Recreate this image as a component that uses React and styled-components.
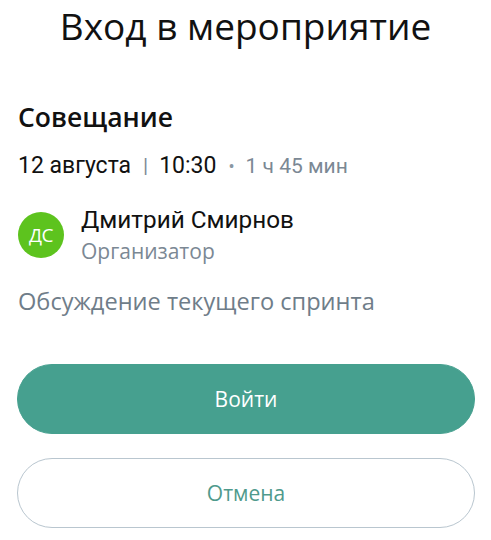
import React from "react";
import styled, { createGlobalStyle } from "styled-components";

const GlobalStyle = createGlobalStyle`
  body {
    margin: 0;
    background: #ffffff;
  }
`;

const Page = styled.div`
  width: 491px;
  height: 540px;
  box-sizing: border-box;
  padding: 0 17px;
  display: flex;
  flex-direction: column;
  background: #ffffff;
  font-family: "Open Sans", sans-serif;
`;

const Title = styled.h1`
  margin: 3px 0 0 0;
  text-align: center;
  font-family: "Open Sans", sans-serif;
  font-weight: 400;
  font-size: 37px;
  line-height: 46px;
  color: #111111;
`;

const Subject = styled.h2`
  margin: 52px 0 0 1px;
  font-family: "Open Sans", sans-serif;
  font-weight: 600;
  font-size: 26.5px;
  line-height: 32px;
  color: #111111;
`;

const When = styled.div`
  margin: 18px 0 0 1px;
  display: flex;
  align-items: baseline;
  font-family: Roboto, sans-serif;
  font-size: 23px;
  line-height: 30px;
  color: #111111;
`;

const Sep = styled.span`
  margin: 0 11px 0 12px;
  color: #7f8c97;
  font-size: 21px;
`;

const Dot = styled.span`
  margin: 0 11px 0 12px;
  color: #8a97a3;
  font-size: 18px;
`;

const Duration = styled.span`
  font-size: 21px;
  color: #7b8894;
`;

const Person = styled.div`
  margin: 24px 0 0 1px;
  display: flex;
  align-items: center;
  gap: 17px;
`;

const Avatar = styled.div`
  width: 46px;
  height: 46px;
  border-radius: 50%;
  background: ${(p) => p.$color};
  color: #ffffff;
  display: flex;
  align-items: center;
  justify-content: center;
  font-family: "Open Sans", sans-serif;
  font-size: 19px;
  letter-spacing: -0.5px;
  flex-shrink: 0;
`;

const PersonText = styled.div`
  display: flex;
  flex-direction: column;
`;

const Name = styled.div`
  font-family: Roboto, sans-serif;
  font-size: 24.3px;
  line-height: 28px;
  color: #111111;
`;

const Role = styled.div`
  margin-top: 4px;
  font-family: "Open Sans", sans-serif;
  font-size: 21px;
  line-height: 26px;
  color: #7b8894;
`;

const Description = styled.p`
  margin: 22px 0 0 1px;
  font-family: "Open Sans", sans-serif;
  font-size: 23.6px;
  line-height: 30px;
  color: #6f7d89;
`;

const Actions = styled.div`
  margin-top: 48px;
  display: flex;
  flex-direction: column;
  gap: 24px;
`;

const Button = styled.button`
  width: 458px;
  height: 70px;
  box-sizing: border-box;
  border-radius: 35px;
  border: 1px solid ${(p) => (p.$primary ? "#46a08f" : "#b9c6cf")};
  background: ${(p) => (p.$primary ? "#46a08f" : "#ffffff")};
  color: ${(p) => (p.$primary ? "#ffffff" : "#4f9a8c")};
  font-family: "Open Sans", sans-serif;
  font-size: 21px;
  cursor: pointer;
`;

export default function App() {
  return (
    <>
      <GlobalStyle />
      <Page>
        <Title>Вход в мероприятие</Title>
        <Subject>Совещание</Subject>
        <When>
          <span>12 августа</span>
          <Sep>|</Sep>
          <span>10:30</span>
          <Dot>•</Dot>
          <Duration>1 ч 45 мин</Duration>
        </When>
        <Person>
          <Avatar $color="#5dc31e">ДС</Avatar>
          <PersonText>
            <Name>Дмитрий Смирнов</Name>
            <Role>Организатор</Role>
          </PersonText>
        </Person>
        <Description>Обсуждение текущего спринта</Description>
        <Actions>
          <Button $primary>Войти</Button>
          <Button>Отмена</Button>
        </Actions>
      </Page>
    </>
  );
}
